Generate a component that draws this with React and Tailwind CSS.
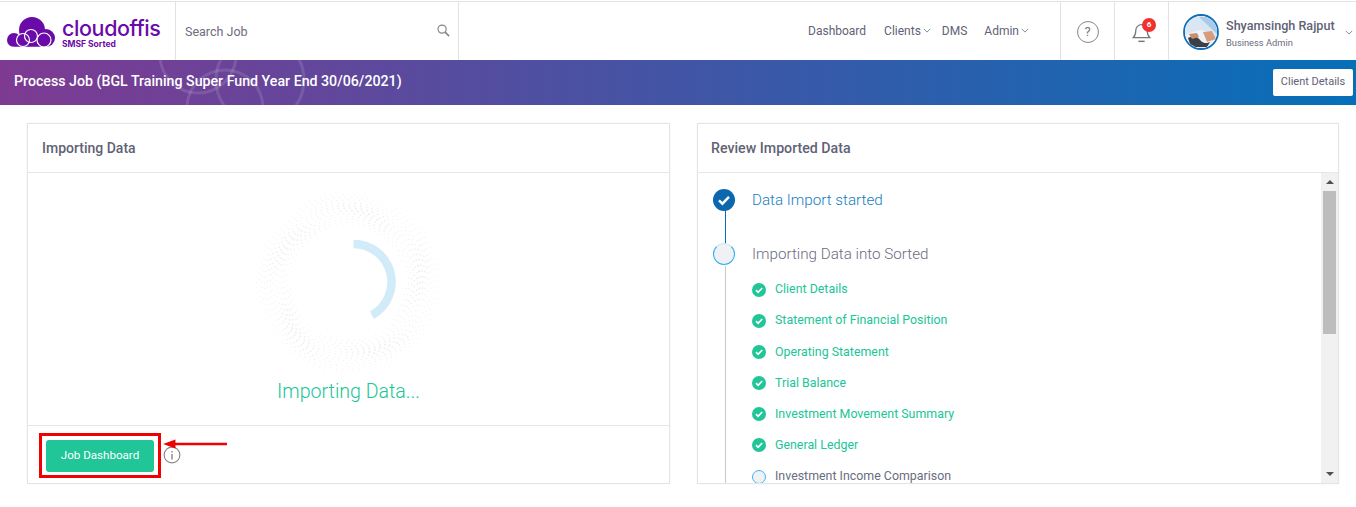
import React from "react";

const Chevron = ({ className = "" }) => (
  <svg viewBox="0 0 10 6" className={`w-[8px] h-[5px] ${className}`} fill="none" stroke="#6b6f80" strokeWidth="1">
    <path d="M1 1l4 4 4-4" />
  </svg>
);

const Logo = () => (
  <svg viewBox="0 0 48 31" className="w-[48px] h-[31px] shrink-0">
    <g fill="#6a0aa8">
      <circle cx="7" cy="23" r="7" />
      <circle cx="25" cy="13" r="13" />
      <circle cx="39" cy="21" r="9" />
      <rect x="7" y="18" width="33" height="12" />
    </g>
    <g fill="none" stroke="#fff" strokeWidth="1.2">
      <circle cx="16" cy="23" r="6.5" />
      <circle cx="24" cy="19" r="6.5" />
      <circle cx="37" cy="23" r="7" />
    </g>
    <path d="M0 30.400h48" stroke="#fff" strokeWidth="1.2" />
  </svg>
);

const Ring = () => {
  const dots = [];
  for (let r = 0; r < 13; r++) {
    const rad = 58 + r * 2.8;
    const n = Math.round(rad * 1.1);
    for (let i = 0; i < n; i++) {
      const a = (i / n) * Math.PI * 2 + r * 0.19;
      const wave = 0.5 + 0.5 * Math.sin(a * 5 + r * 0.4);
      const edge = 1 - Math.abs(r - 5) / 8;
      const size = 0.4 + 0.8 * (0.35 + 0.65 * wave) * edge;
      dots.push(
        <circle key={`${r}-${i}`} cx={95 + rad * Math.cos(a)} cy={95 + rad * Math.sin(a)} r={size} fill="#f0f1f3" />
      );
    }
  }
  return (
    <svg viewBox="0 0 190 190" className="w-[190px] h-[190px]">
      {dots}
      <path d="M100.500 56A38 38 0 0 1 119 127.200" fill="none" stroke="#d2ebf8" strokeWidth="8.500" />
    </svg>
  );
};

const Check = () => (
  <svg viewBox="0 0 14 14" className="w-[14px] h-[14px] shrink-0">
    <circle cx="7" cy="7" r="7" fill="#20c598" />
    <path d="M4 7.200l2.100 2.100L10.200 5" fill="none" stroke="#fff" strokeWidth="1.700" />
  </svg>
);

const items = [
  "Client Details",
  "Statement of Financial Position",
  "Operating Statement",
  "Trial Balance",
  "Investment Movement Summary",
  "General Ledger",
];

export default function App() {
  return (
    <div className="w-[1356px] h-[507px] overflow-hidden bg-white font-['Roboto',sans-serif]">
      <header className="h-[60px] mt-px border-t border-t-[#e4e4e4] flex text-[#5f6275] box-border">
        <div className="w-[176px] shrink-0 pl-[7px] flex items-center gap-[7px] border-r border-[#e2e2e2] pt-[2px]">
          <Logo />
          <div className="flex flex-col text-[#6a0aa8]">
            <span className="font-['Inter',sans-serif] font-medium text-[21.500px] leading-[22px] -tracking-[0.4px] whitespace-nowrap">cloudoffis</span>
            <span className="font-['Inter',sans-serif] font-bold text-[8.500px] leading-[10px] whitespace-nowrap">SMSF Sorted</span>
          </div>
        </div>
        <div className="w-[283px] shrink-0 pl-[9px] pr-[8px] flex items-center justify-between border-r border-[#e2e2e2]">
          <span className="text-[12.500px] text-[#6a6d7d] pt-[1px]">Search Job</span>
          <svg viewBox="0 0 14 14" className="w-[13px] h-[13px] -mt-[3px]" fill="none" stroke="#85878f" strokeWidth="1.300">
            <circle cx="5.500" cy="5.500" r="4.400" />
            <path d="M8.800 8.800L13 13" strokeWidth="1.700" />
          </svg>
        </div>
        <nav className="flex-1 flex items-center justify-end pr-[31px] text-[12px] pb-[2px]">
          <span>Dashboard</span>
          <span className="ml-[18px]">Clients</span>
          <Chevron className="ml-[2px]" />
          <span className="ml-[11px]">DMS</span>
          <span className="ml-[17px]">Admin</span>
          <Chevron className="ml-[2px]" />
        </nav>
        <div className="w-[54px] shrink-0 flex items-center justify-center border-l border-[#e2e2e2]">
          <div className="w-[22px] h-[22px] rounded-full border-[1.500px] border-[#85878a] flex items-center justify-center text-[13px] text-[#77797c] mt-[1px]">?</div>
        </div>
        <div className="w-[54px] shrink-0 flex items-center justify-center border-l border-[#e2e2e2] relative">
          <svg viewBox="0 0 20 24" className="w-[21px] h-[25px] mt-[2px]" fill="none" stroke="#75777b" strokeWidth="1.200">
            <path d="M2 17c2-2 2.500-4 2.500-7a5.500 5.500 0 0 1 11 0c0 3 .5 5 2.500 7z" />
            <path d="M7 20.500h6" strokeWidth="1.400" />
          </svg>
          <span className="absolute left-[27px] top-[16px] w-[14px] h-[14px] rounded-full bg-[#f0322f] text-white text-[8px] font-bold flex items-center justify-center">6</span>
        </div>
        <div className="w-[188px] shrink-0 flex items-center border-l border-[#e2e2e2] pl-[14px]">
          <svg viewBox="0 0 36 36" className="w-[36px] h-[36px] shrink-0">
            <defs>
              <clipPath id="av"><circle cx="18" cy="18" r="16" /></clipPath>
            </defs>
            <circle cx="18" cy="18" r="17" fill="#fff" stroke="#0e6db6" strokeWidth="1.800" />
            <g clipPath="url(#av)">
              <rect width="36" height="36" fill="#d8e7f3" />
              <path d="M16 3L34 20V3z" fill="#a8cbe8" />
              <path d="M3 20l14-4 13 2 6 14H3z" fill="#eef2f6" />
              <path d="M20 18l9-1 4 8-9 3z" fill="#d79b7e" />
              <path d="M5 24c6-3 9-2 13 3 3 3 7 2 9 1l-3 5H8z" fill="#3c4045" />
              <path d="M6 20l8-1 2 4-7 2z" fill="#c98d70" />
            </g>
          </svg>
          <div className="ml-[7px] flex flex-col pt-[3px]">
            <span className="text-[12.600px] font-medium leading-[17px] whitespace-nowrap text-[#5f6275]">Shyamsingh Rajput</span>
            <span className="text-[9.300px] leading-[14px] mt-[2px] text-[#6a6d7d]">Business Admin</span>
          </div>
          <Chevron className="ml-[10px] mt-[2px]" />
        </div>
      </header>

      <div className="relative h-[45px] -mt-[1px] bg-linear-to-r/srgb from-[#7e3a92] to-[#066fb8] flex items-center justify-between pl-[14px] pr-[3px] overflow-hidden">
        <svg viewBox="0 0 200 45" className="absolute left-[135px] top-0 w-[200px] h-[45px]" fill="none" stroke="#fff" strokeOpacity="0.12" strokeWidth="3">
          <circle cx="63" cy="-5" r="38" />
          <circle cx="125" cy="20" r="44" />
          <circle cx="90" cy="48" r="38" />
        </svg>
        <h1 className="relative text-white text-[14.200px] font-medium leading-none -mt-[2px]">Process Job (BGL Training Super Fund Year End 30/06/2021)</h1>
        <button className="relative w-[80px] h-[27px] bg-white rounded-[2px] text-[11px] text-[#5f6275] -mt-[1px]">Client Details</button>
      </div>

      <main className="flex gap-[27px] pt-[18px] pl-[27px] pr-[17px]">
        <section className="relative w-[643px] h-[361px] border border-[#e4e4e8] shadow-[0_0_2px_rgba(0,0,0,0.05)] flex flex-col">
          <div className="h-[49px] border-b border-[#e6e6e6] flex items-center pl-[14px] pt-[1px] text-[14px] font-medium text-[#5f6275]">Importing Data</div>
          <div className="h-[253px] border-b border-[#e6e6e6] flex flex-col items-center">
            <div className="mt-[15px] -ml-[1px]"><Ring /></div>
            <div className="mt-[2px] text-[19.600px] font-light text-[#20c598] leading-[24px]">Importing Data...</div>
          </div>
          <div className="flex-1 flex items-center pl-[18px] gap-[9px]">
            <button className="w-[108px] h-[32px] mt-[3px] bg-[#20c598] rounded-[3px] text-white text-[11.600px]">Job Dashboard</button>
            <svg viewBox="0 0 18 18" className="w-[18px] h-[18px] mt-[1px]" fill="none" stroke="#85878a" strokeWidth="1.100">
              <circle cx="9" cy="9" r="7.900" />
              <path d="M9 8v5.500M9 5v1.500" strokeWidth="1.400" />
            </svg>
          </div>
          <div className="absolute left-[11px] top-[309px] w-[122px] h-[45px] border-[3px] border-[#f00000]" />
          <svg viewBox="0 0 64 12" preserveAspectRatio="none" className="absolute left-[133px] top-[314px] w-[66px] h-[12px]">
            <path d="M2 6L14 1.500V4.800H64V7.200H14V10.500z" fill="#f00000" />
          </svg>
        </section>

        <section className="w-[642px] h-[361px] border border-[#e4e4e8] shadow-[0_0_2px_rgba(0,0,0,0.05)] flex flex-col">
          <div className="h-[49px] shrink-0 border-b border-[#e6e6e6] flex items-center pl-[13px] pt-[1px] text-[14.200px] font-medium text-[#5f6275]">Review Imported Data</div>
          <div className="flex-1 flex min-h-0">
            <div className="flex-1 relative overflow-hidden pl-[15px] pt-[16px]">
              <div className="absolute left-[27px] top-[37px] w-px h-[34px] bg-[#0e6db6]" />
              <div className="absolute left-[27px] top-[93px] w-px h-[230px] bg-[#c9c9cc]" />
              <div className="relative flex items-center h-[22px]">
                <svg viewBox="0 0 22 22" className="w-[22px] h-[22px] shrink-0">
                  <circle cx="11" cy="11" r="11" fill="#0b68ae" />
                  <path d="M6 11.400l3.400 3.300L16 7.800" fill="none" stroke="#fff" strokeWidth="2.400" />
                </svg>
                <span className="ml-[17px] text-[15.200px] font-light text-[#127ec0]">Data Import started</span>
              </div>
              <div className="relative flex items-center h-[22px] mt-[32px]">
                <span className="w-[22px] h-[22px] shrink-0 rounded-full bg-[#eff1f4] border-[1.500px] border-[#2ab0ef] border-t-[#cde8f7]" />
                <span className="ml-[17px] text-[15.200px] font-light text-[#6a6d7f]">Importing Data into Sorted</span>
              </div>
              <ul className="relative mt-[14px] pl-[39px] flex flex-col gap-[10.200px]">
                {items.map((t) => (
                  <li key={t} className="flex items-center h-[21px] text-[12.400px] text-[#20c598]">
                    <Check />
                    <span className="ml-[9px]">{t}</span>
                  </li>
                ))}
                <li className="flex items-center h-[21px] text-[12.400px] text-[#6a6d7f]">
                  <span className="w-[14px] h-[14px] shrink-0 rounded-full bg-[#eff1f4] border-[1.500px] border-[#41b6f0]" />
                  <span className="ml-[9px]">Investment Income Comparison</span>
                </li>
              </ul>
            </div>
            <div className="w-[17px] shrink-0 bg-[#f1f1f1] flex flex-col items-center">
              <svg viewBox="0 0 8 4" className="w-[8px] h-[4px] mt-[7px]"><path d="M4 0l4 4H0z" fill="#505050" /></svg>
              <div className="w-[13px] h-[143px] mt-[7px] bg-[#bdbdbd]" />
              <div className="flex-1" />
              <svg viewBox="0 0 8 4" className="w-[8px] h-[4px] mb-[7px]"><path d="M0 0h8L4 4z" fill="#505050" /></svg>
            </div>
          </div>
        </section>
      </main>
    </div>
  );
}
